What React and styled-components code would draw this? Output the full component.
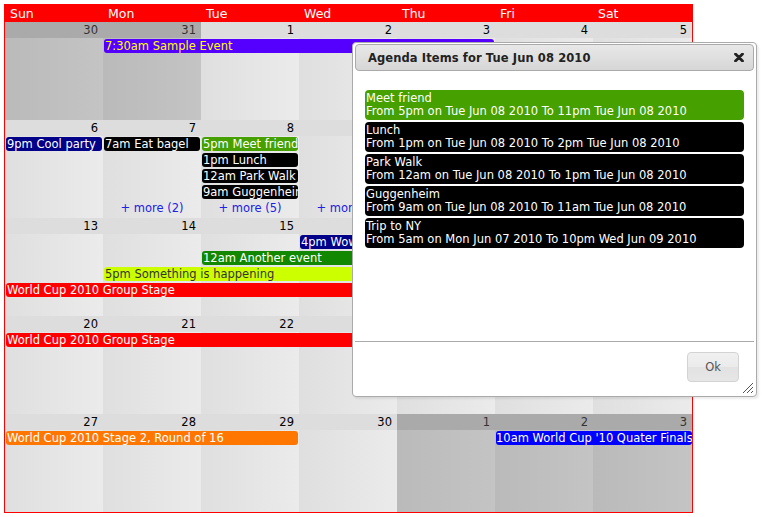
import React from "react";
import styled, { createGlobalStyle } from "styled-components";

const Global = createGlobalStyle`
  html, body { margin: 0; padding: 0; background: #fff; }
  body { font-family: "DejaVu Sans", Verdana, sans-serif; }
`;

const COLS = "repeat(6, 98px) 99px";

const Page = styled.div`
  position: relative;
  padding: 4px;
  width: 756px;
  height: 509px;
`;

const Calendar = styled.div`
  width: 687px;
  border: 1px solid #ff0000;
`;

const HeaderRow = styled.div`
  display: grid;
  grid-template-columns: ${COLS};
  height: 17px;
  background: #ff0000;
`;

const DayName = styled.div`
  color: #fff;
  font-size: 12.5px;
  line-height: 17px;
  padding-left: 5px;
`;

const Week = styled.div`
  display: grid;
  grid-template-columns: ${COLS};
  grid-template-rows: 16px repeat(4, 16px) 17px 1fr;
  height: 98px;
`;

const Cell = styled.div`
  grid-row: 1 / -1;
  grid-column: ${(p) => p.$col};
  display: flex;
  flex-direction: column;
`;

const Band = styled.div`
  height: 16px;
  background: ${(p) => (p.$other ? "#aaaaaa" : "#dddddd")};
  color: ${(p) => (p.$other ? "#333" : "#000")};
  font-size: 11.5px;
  line-height: 16px;
  text-align: right;
  padding-right: 5px;
`;

const Body = styled.div`
  flex: 1;
  background: ${(p) =>
    p.$other
      ? "linear-gradient(to right, #bababa, #c4c4c4)"
      : "linear-gradient(to right, #dfdfdf, #ebebeb)"};
`;

const Event = styled.div`
  grid-row: ${(p) => p.$row + 1};
  grid-column: ${(p) => `${p.$col} / span ${p.$span}`};
  align-self: center;
  margin: 0 ${(p) => (p.$flush ? "0" : "1px")} 0 1px;
  height: 14px;
  border-radius: 3px;
  background: ${(p) => p.$bg};
  color: ${(p) => p.$fg};
  font-size: 11.5px;
  line-height: 14px;
  padding-left: 1px;
  white-space: nowrap;
  overflow: hidden;
`;

const More = styled.div`
  grid-row: 6;
  grid-column: ${(p) => p.$col};
  align-self: center;
  text-align: center;
  color: #2020e6;
  font-size: 11.5px;
  line-height: 15px;
`;

const Dialog = styled.div`
  position: absolute;
  left: 352px;
  top: 42px;
  width: 405px;
  height: 355px;
  box-sizing: border-box;
  border: 1px solid #aaaaaa;
  border-radius: 4px;
  padding: 1px 2px 0 2px;
  background: #fff;
  box-shadow: 2px 2px 2px rgba(0, 0, 0, 0.08);
  display: flex;
  flex-direction: column;
`;

const TitleBar = styled.div`
  height: 27px;
  box-sizing: border-box;
  border: 1px solid #aaaaaa;
  border-radius: 4px;
  background: linear-gradient(to bottom, #e8e8e8, #d6d6d6);
  display: flex;
  align-items: center;
  justify-content: space-between;
  padding: 0 9px 0 12px;
`;

const Title = styled.span`
  font-weight: bold;
  font-size: 11.5px;
  letter-spacing: 0.1px;
  color: #222;
`;

const CloseIcon = styled.svg`
  width: 10px;
  height: 9px;
  display: block;
`;

const Content = styled.div`
  flex: 1;
  padding: 19px 10px 0 10px;
  display: flex;
  flex-direction: column;
  gap: 2px;
`;

const Item = styled.div`
  background: ${(p) => p.$bg};
  color: #fff;
  border-radius: 4px;
  height: 30px;
  box-sizing: border-box;
  padding: 2px 1px;
  font-size: 11.5px;
  line-height: 13px;
  white-space: nowrap;
`;

const ButtonPane = styled.div`
  height: 55px;
  box-sizing: border-box;
  border-top: 1px solid #aaaaaa;
  padding: 10px 15px 0 0;
  display: flex;
  justify-content: flex-end;
  align-items: flex-start;
`;

const OkButton = styled.button`
  width: 52px;
  height: 30px;
  border: 1px solid #d3d3d3;
  border-radius: 4px;
  background: linear-gradient(to bottom, #f0f0f0 0%, #ebebeb 50%, #e2e2e2 51%, #e6e6e6 100%);
  color: #555;
  font-family: "DejaVu Sans", Verdana, sans-serif;
  font-size: 11.5px;
  padding: 0;
`;

const Grip = styled.svg`
  position: absolute;
  right: 2px;
  bottom: 2px;
  width: 12px;
  height: 12px;
`;

const weeks = [
  {
    days: [30, 31, 1, 2, 3, 4, 5],
    other: [1, 1, 0, 0, 0, 0, 0],
    events: [
      { row: 1, col: 2, span: 4, bg: "#5500ff", fg: "#ffff00", text: "7:30am Sample Event" },
    ],
    more: [],
  },
  {
    days: [6, 7, 8, 9, 10, 11, 12],
    other: [0, 0, 0, 0, 0, 0, 0],
    events: [
      { row: 1, col: 1, span: 1, bg: "#000088", fg: "#fff", text: "9pm Cool party" },
      { row: 1, col: 2, span: 1, bg: "#000", fg: "#fff", text: "7am Eat bagel" },
      { row: 1, col: 3, span: 1, bg: "#46a000", fg: "#fff", text: "5pm Meet friend" },
      { row: 2, col: 3, span: 1, bg: "#000", fg: "#fff", text: "1pm Lunch" },
      { row: 3, col: 3, span: 1, bg: "#000", fg: "#fff", text: "12am Park Walk" },
      { row: 4, col: 3, span: 1, bg: "#000", fg: "#fff", text: "9am Guggenheim" },
    ],
    more: [
      { col: 2, n: 2 },
      { col: 3, n: 5 },
      { col: 4, n: 3 },
    ],
  },
  {
    days: [13, 14, 15, 16, 17, 18, 19],
    other: [0, 0, 0, 0, 0, 0, 0],
    events: [
      { row: 1, col: 4, span: 1, bg: "#000088", fg: "#fff", text: "4pm Wow" },
      { row: 2, col: 3, span: 2, bg: "#118800", fg: "#fff", text: "12am Another event" },
      { row: 3, col: 2, span: 3, bg: "#ccff00", fg: "#333", text: "5pm Something is happening" },
      { row: 4, col: 1, span: 7, bg: "#ff0000", fg: "#fff", text: "World Cup 2010 Group Stage" },
    ],
    more: [],
  },
  {
    days: [20, 21, 22, 23, 24, 25, 26],
    other: [0, 0, 0, 0, 0, 0, 0],
    events: [
      { row: 1, col: 1, span: 7, bg: "#ff0000", fg: "#fff", text: "World Cup 2010 Group Stage" },
    ],
    more: [],
  },
  {
    days: [27, 28, 29, 30, 1, 2, 3],
    other: [0, 0, 0, 0, 1, 1, 1],
    events: [
      { row: 1, col: 1, span: 3, bg: "#ff7700", fg: "#fff", text: "World Cup 2010 Stage 2, Round of 16" },
      { row: 1, col: 6, span: 2, bg: "#0000ff", fg: "#fff", text: "10am World Cup '10 Quater Finals", flush: true },
    ],
    more: [],
  },
];

const dayNames = ["Sun", "Mon", "Tue", "Wed", "Thu", "Fri", "Sat"];

const agenda = [
  { bg: "#46a000", title: "Meet friend", when: "From 5pm on Tue Jun 08 2010 To 11pm Tue Jun 08 2010" },
  { bg: "#000", title: "Lunch", when: "From 1pm on Tue Jun 08 2010 To 2pm Tue Jun 08 2010" },
  { bg: "#000", title: "Park Walk", when: "From 12am on Tue Jun 08 2010 To 1pm Tue Jun 08 2010" },
  { bg: "#000", title: "Guggenheim", when: "From 9am on Tue Jun 08 2010 To 11am Tue Jun 08 2010" },
  { bg: "#000", title: "Trip to NY", when: "From 5am on Mon Jun 07 2010 To 10pm Wed Jun 09 2010" },
];

export default function App() {
  return (
    <>
      <Global />
      <Page>
        <Calendar>
          <HeaderRow>
            {dayNames.map((d) => (
              <DayName key={d}>{d}</DayName>
            ))}
          </HeaderRow>
          {weeks.map((w, wi) => (
            <Week key={wi}>
              {w.days.map((d, i) => (
                <Cell key={i} $col={i + 1}>
                  <Band $other={!!w.other[i]}>{d}</Band>
                  <Body $other={!!w.other[i]} />
                </Cell>
              ))}
              {w.events.map((e, i) => (
                <Event
                  key={i}
                  $row={e.row}
                  $col={e.col}
                  $span={e.span}
                  $bg={e.bg}
                  $fg={e.fg}
                  $flush={e.flush}
                  style={e.flush ? { paddingLeft: 0 } : undefined}
                >
                  {e.text}
                </Event>
              ))}
              {w.more.map((m) => (
                <More key={m.col} $col={m.col}>
                  + more ({m.n})
                </More>
              ))}
            </Week>
          ))}
        </Calendar>

        <Dialog>
          <TitleBar>
            <Title>Agenda Items for Tue Jun 08 2010</Title>
            <CloseIcon viewBox="0 0 10 9">
              <path d="M1.5 1 L8.5 8 M8.5 1 L1.5 8" stroke="#222" strokeWidth="2.8" strokeLinecap="round" />
            </CloseIcon>
          </TitleBar>
          <Content>
            {agenda.map((a, i) => (
              <Item key={i} $bg={a.bg}>
                {a.title}
                <br />
                {a.when}
              </Item>
            ))}
          </Content>
          <ButtonPane>
            <OkButton>Ok</OkButton>
          </ButtonPane>
          <Grip viewBox="0 0 12 12">
            <path d="M11 1 L1 11 M11 5 L5 11 M11 9 L9 11" stroke="#555" strokeWidth="1" />
          </Grip>
        </Dialog>
      </Page>
    </>
  );
}
